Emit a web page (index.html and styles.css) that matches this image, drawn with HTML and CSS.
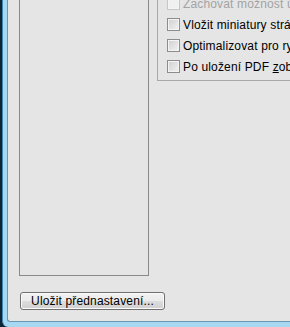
FILE: index.html
```html
<html>
  <head>
    <title>Uložit Adobe PDF</title>
    <meta charset="utf-8" />
    <link rel="stylesheet" href="styles.css">
  </head>
  <body>
    <div class="frame">
      <div class="client">
        <div class="main">
          <div class="preset-list"></div>
          <div class="options">
            <label class="row disabled"><span class="check"></span><span>Zachovat možnost úprav v aplikaci Photoshop</span></label>
            <label class="row"><span class="check"></span><span>Vložit miniatury stránek</span></label>
            <label class="row"><span class="check"></span><span>Optimalizovat pro rychlé zobrazení na webu</span></label>
            <label class="row"><span class="check"></span><span>Po uložení PDF <u>z</u>obrazit</span></label>
          </div>
        </div>
        <div class="buttons">
          <button class="btn">Uložit přednastavení...</button>
        </div>
      </div>
    </div>
  </body>
</html>
```
FILE: styles.css
```css
html, body{
    margin: 0;
    padding: 0;
    height: 100%;
    overflow: hidden;
}

body{
    font-family: "Liberation Sans", Arial, sans-serif;
    font-size: 12px;
    letter-spacing: 0.15px;
    color: #000;
    background-color: #0c2434;
}

.frame{
    box-sizing: border-box;
    height: 100%;
    margin-left: 2px;
    border-left: 1px solid #3f86b0;
    background-color: #a6d8f2;
    padding: 0 0 5px 4px;
    border-bottom-left-radius: 6px;
}

.client{
    box-sizing: border-box;
    height: 100%;
    background-color: #e5e5e5;
    border-left: 1px solid #6a96b0;
    border-bottom: 1px solid #6a96b0;
    border-bottom-left-radius: 3px;
    display: flex;
    flex-direction: column;
}

.main{
    display: flex;
    align-items: flex-start;
    margin-top: -40px;
    gap: 8px;
}

.preset-list{
    box-sizing: border-box;
    width: 130px;
    height: 316px;
    margin-left: 11px;
    border: 1px solid #8a8a8a;
}

.options{
    flex: 1;
    padding: 32px 0 3px 9px;
    border: 1px solid #a9a9a9;
    border-right: none;
    white-space: nowrap;
    overflow: hidden;
}

.row{
    display: flex;
    align-items: center;
    height: 21px;
    gap: 3px;
}

.check{
    box-sizing: border-box;
    flex: none;
    width: 13px;
    height: 13px;
    border: 1px solid #8c8c8c;
    background: linear-gradient(135deg, #cfcfcf, #f3f3f3);
    box-shadow: inset 0 0 0 1px #f4f4f4;
}

.disabled{
    color: #a3a3a3;
}

.disabled .check{
    border-color: #c6c6c6;
    background: #f0f0f0;
}

.buttons{
    padding: 16px 0 0 12px;
}

.btn{
    box-sizing: border-box;
    width: 145px;
    height: 18px;
    padding: 0;
    font-family: inherit;
    font-size: 12px;
    letter-spacing: 0.15px;
    color: #000;
    border: 1px solid #707070;
    border-radius: 3px;
    background: linear-gradient(#f2f2f2, #ebebeb 50%, #dddddd 51%, #cfcfcf);
    box-shadow: inset 0 0 0 1px #fafafa;
}
```
